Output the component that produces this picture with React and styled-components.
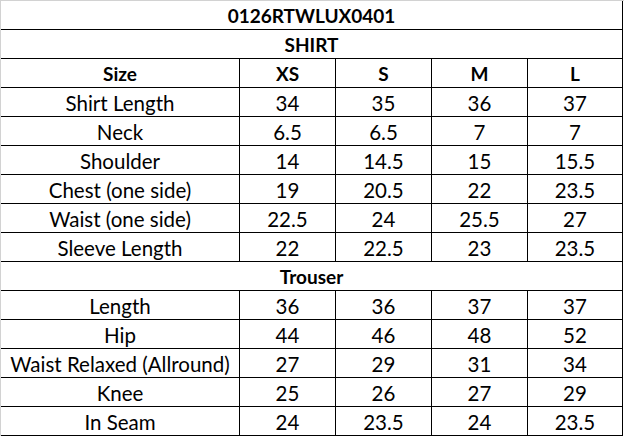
import styled, { createGlobalStyle } from "styled-components";

const GlobalStyle = createGlobalStyle`
  html, body {
    margin: 0;
    padding: 0;
    background: #ffffff;
  }
`;

const sizes = ["XS", "S", "M", "L"];

const shirt = [
  ["Shirt Length", "34", "35", "36", "37"],
  ["Neck", "6.5", "6.5", "7", "7"],
  ["Shoulder", "14", "14.5", "15", "15.5"],
  ["Chest (one side)", "19", "20.5", "22", "23.5"],
  ["Waist (one side)", "22.5", "24", "25.5", "27"],
  ["Sleeve Length", "22", "22.5", "23", "23.5"],
];

const trouser = [
  ["Length", "36", "36", "37", "37"],
  ["Hip", "44", "46", "48", "52"],
  ["Waist Relaxed (Allround)", "27", "29", "31", "34"],
  ["Knee", "25", "26", "27", "29"],
  ["In Seam", "24", "23.5", "24", "23.5"],
];

export default function App() {
  // one row per line of the chart
  const renderRow = (row) => (
    <Row key={row[0]}>
      {row.map((value, i) => (
        <Cell key={i}>{value}</Cell>
      ))}
    </Row>
  );

  return (
    <>
      <GlobalStyle />
      <Sheet>
        <Row>
          <Cell $span $bold>
            0126RTWLUX0401
          </Cell>
        </Row>
        <Row>
          <Cell $span $bold>
            SHIRT
          </Cell>
        </Row>
        <Row>
          <Cell $bold>Size</Cell>
          {sizes.map((size) => (
            <Cell key={size} $bold>
              {size}
            </Cell>
          ))}
        </Row>
        {shirt.map(renderRow)}
        <Row>
          <Cell $span $bold>
            Trouser
          </Cell>
        </Row>
        {trouser.map(renderRow)}
      </Sheet>
    </>
  );
}

const Sheet = styled.div`
  width: 623px;
  border-top: 1px solid #d2d2d2;
  border-left: 1px solid #d2d2d2;
  font-family: "Lato", "Liberation Sans", sans-serif;
  color: #000000;
`;

const Row = styled.div`
  display: grid;
  grid-template-columns: 239px 96px 96px 96px 95px;
  height: 29px;
`;

const Cell = styled.div`
  grid-column: ${(props) => (props.$span ? "1 / -1" : "auto")};
  display: flex;
  align-items: center;
  justify-content: center;
  box-sizing: border-box;
  border-right: 1px solid #000000;
  border-bottom: 1px solid #000000;
  padding-top: 1px;
  font-size: ${(props) => (props.$bold ? "19px" : "20.5px")};
  font-weight: ${(props) => (props.$bold ? 700 : 400)};
  white-space: nowrap;
`;
